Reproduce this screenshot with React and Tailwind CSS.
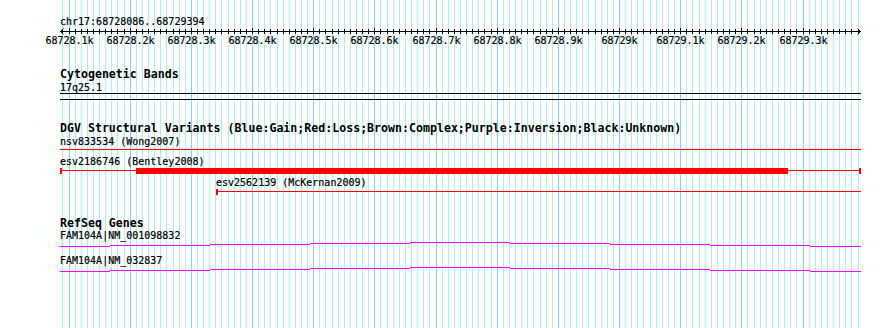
import React from 'react';

const START = 68728086;
const END = 68729394;
const px = (bp) => 60 + ((bp - START) * 800) / (END - START);

const ticks = [];
for (let bp = 68728090; bp <= END; bp += 10) {
  ticks.push({ bp, x: Math.round(px(bp)), major: bp % 100 === 0 });
}

const tickLabel = (bp) => {
  const rest = bp % 1000;
  return `${Math.floor(bp / 1000)}${rest ? '.' + rest / 100 : ''}k`;
};

// hat connector, drawn in 1px steps like the gd original
const hatSteps = [
  [60, 110, 4], [110, 210, 3], [210, 310, 2], [310, 410, 1], [410, 510, 0],
  [510, 610, 1], [610, 710, 2], [710, 810, 3], [810, 861, 4],
];

const Grid = () => (
  <svg className="absolute inset-0" width="890" height="328">
    {ticks.map((t) => (
      <rect key={t.bp} x={t.x} y="0" width="1" height="328" fill={t.major ? '#87cefa' : '#afeeee'} />
    ))}
  </svg>
);

const Ruler = () => (
  <svg className="block" width="890" height="18">
    <rect x="60" y="3" width="801" height="1" fill="#000" />
    <path d="M63.5 0.5 L60.5 3.5 L63.5 6.5 M857.5 0.5 L860.5 3.5 L857.5 6.5" stroke="#000" fill="none" />
    {ticks.map((t) => (
      <rect key={t.bp} x={t.x} y={t.major ? 0 : 1} width="1" height={t.major ? 6 : 5} fill="#000" />
    ))}
    {ticks.filter((t) => t.major).map((t) => (
      <text
        key={t.bp}
        x={t.x + 0.5}
        y="16"
        textAnchor="middle"
        fontSize="10"
        fontFamily="'DejaVu Sans Mono', monospace"
        fill="#000"
        stroke="#000"
        strokeWidth="0.2"
      >
        {tickLabel(t.bp)}
      </text>
    ))}
  </svg>
);

const Title = ({ children, className = '' }) => (
  <div className={`pl-[60px] text-[11.6px] font-bold leading-[14px] whitespace-nowrap ${className}`}>{children}</div>
);

const Label = ({ children, className = '' }) => (
  <div className={`text-[10px] leading-[13px] whitespace-nowrap [-webkit-text-stroke:0.2px_#000] ${className}`}>{children}</div>
);

const Hat = ({ className = '' }) => (
  <svg className={`block ${className}`} width="890" height="10">
    {hatSteps.map(([x1, x2, y]) => (
      <rect key={x1} x={x1} y={2 + y} width={x2 - x1} height="1" fill="#ff00ff" />
    ))}
  </svg>
);

export default function App() {
  return (
    <div className="relative h-[328px] w-[890px] overflow-hidden bg-[#fdfffd] text-black [font-family:'DejaVu_Sans_Mono',monospace]">
      <Grid />
      <div className="relative flex flex-col">
        <Label className="mt-[15px] pl-[60px]">chr17:68728086..68729394</Label>
        <Ruler />

        <Title className="mt-[21px]">Cytogenetic Bands</Title>
        <Label className="pl-[60px]">17q25.1</Label>
        <svg className="-mt-[2px] block" width="890" height="10">
          <rect x="60" y="1" width="801" height="1" fill="#000" />
          <rect x="60" y="7" width="801" height="1" fill="#000" />
        </svg>

        <Title className="mt-[19px]">
          DGV Structural Variants (Blue:Gain;Red:Loss;Brown:Complex;Purple:Inversion;Black:Unknown)
        </Title>
        <Label className="pl-[60px]">nsv833534 (Wong2007)</Label>
        <svg className="block" width="890" height="7">
          <rect x="60" y="1" width="801" height="1" fill="#ff0000" />
        </svg>
        <Label className="pl-[60px]">esv2186746 (Bentley2008)</Label>
        <svg className="block" width="890" height="8">
          <rect x="60" y="2" width="801" height="1" fill="#ff0000" />
          <rect x="60" y="0" width="2" height="6" fill="#ff0000" />
          <rect x="859" y="0" width="2" height="6" fill="#ff0000" />
          <rect x="136" y="0" width="652" height="6" fill="#ff0000" />
        </svg>
        <Label className="pl-[216px]">esv2562139 (McKernan2009)</Label>
        <svg className="-mt-[2px] block" width="890" height="9">
          <rect x="216" y="4" width="645" height="1" fill="#ff0000" />
          <rect x="216" y="2" width="2" height="6" fill="#ff0000" />
        </svg>

        <Title className="mt-[20px]">RefSeq Genes</Title>
        <Label className="-mt-[1px] pl-[60px]">FAM104A|NM_001098832</Label>
        <Hat className="-mt-[2px]" />
        <Label className="mt-[4px] pl-[60px]">FAM104A|NM_032837</Label>
        <Hat className="-mt-[2px]" />
      </div>
    </div>
  );
}
